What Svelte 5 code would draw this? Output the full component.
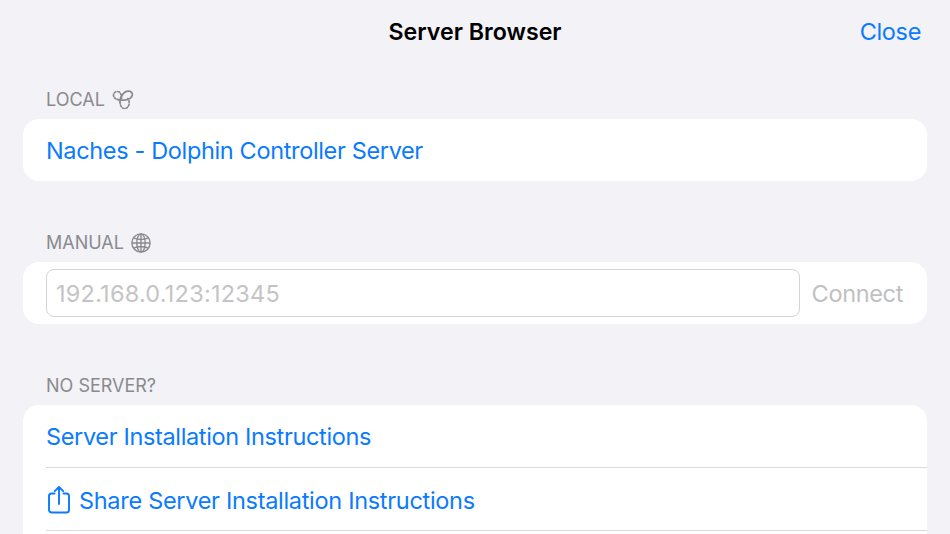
<script>
  const noServerRows = [
    { label: "Server Installation Instructions", share: false },
    { label: "Share Server Installation Instructions", share: true },
    { label: "", share: false },
  ];
</script>

<div class="sheet">
  <header class="nav">
    <h1>Server Browser</h1>
    <button type="button" class="close">Close</button>
  </header>

  <section>
    <h2>
      LOCAL
      <svg class="glyph" width="22" height="20" viewBox="0 0 22 20" fill="none" stroke="#8a8a8e" stroke-width="1.7" stroke-linecap="round">
        <path d="M9.5 8.5C9.5 4 8 1.5 5.5 1.5 3 1.5 1.5 3.3 1.5 5.2c0 2.6 2.4 4.1 5.5 4.6" stroke-dasharray="1.8 1.7" />
        <path d="M7 9.8c3.6.6 8.6.4 11-1.4 2.6-2 3-4.4 1.6-6C18 .7 14 .8 12 2.8 9.6 5.2 8 8.4 8 11.5" />
        <path d="M8 11.5c0 3.6 1.4 7 4.6 7 3 0 4.6-3 4.6-6.2 0-1.4-.6-2.6-1.6-3.6" stroke-dasharray="1.8 1.7" />
      </svg>
    </h2>
    <div class="card">
      <button type="button" class="row">Naches - Dolphin Controller Server</button>
    </div>
  </section>

  <section>
    <h2>
      MANUAL
      <svg class="glyph" width="20" height="20" viewBox="0 0 20 20" fill="none" stroke="#8a8a8e" stroke-width="1.4">
        <circle cx="10" cy="10" r="9.1" />
        <ellipse cx="10" cy="10" rx="4.2" ry="9.1" />
        <path d="M10 .9v18.2M.9 10h18.2M2.6 4.8c4.4 2 10.4 2 14.8 0M2.6 15.2c4.4-2 10.4-2 14.8 0" />
      </svg>
    </h2>
    <div class="card manual">
      <input type="text" placeholder="192.168.0.123:12345" />
      <span class="connect">Connect</span>
    </div>
  </section>

  <section>
    <h2>NO SERVER?</h2>
    <div class="card">
      {#each noServerRows as row}
        <div class="row-wrap">
          <button type="button" class="row" class:with-icon={row.share}>
            {#if row.share}
              <svg class="share" width="24" height="29" viewBox="0 0 24 29" fill="none" stroke="#0a7aff" stroke-width="1.9" stroke-linecap="round" stroke-linejoin="round">
                <path d="M7.5 8.5H4.6A2.6 2.6 0 0 0 2 11.1v13.8a2.6 2.6 0 0 0 2.6 2.6h14.8a2.6 2.6 0 0 0 2.6-2.6V11.1a2.6 2.6 0 0 0-2.6-2.6h-2.9" />
                <path d="M12 19V2M7.8 6.2 12 2l4.2 4.2" />
              </svg>
            {/if}
            {row.label}
          </button>
        </div>
      {/each}
    </div>
  </section>
</div>

<style>
  :global(body) {
    margin: 0;
    background: #f2f2f7;
    overflow: hidden;
  }

  .sheet {
    height: 534px;
    overflow: hidden;
    font-family: Inter, "Liberation Sans", sans-serif;
    background: #f2f2f7;
  }

  .nav {
    height: 63px;
    display: grid;
    grid-template-columns: 1fr auto 1fr;
    align-items: center;
    padding: 0 29px;
  }

  h1 {
    grid-column: 2;
    margin: 0;
    font-size: 23.2px;
    font-weight: 600;
    color: #000;
  }

  .close {
    justify-self: end;
    border: 0;
    padding: 0;
    background: none;
    font: inherit;
    font-size: 23.5px;
    letter-spacing: -0.35px;
    color: #0a7aff;
  }

  section {
    padding: 0 23px;
    margin-bottom: 38px;
  }

  h2 {
    height: 56px;
    margin: 0;
    padding: 0 0 7px 23px;
    box-sizing: border-box;
    display: flex;
    align-items: flex-end;
    gap: 7px;
    font-size: 18px;
    line-height: 24px;
    font-weight: 400;
    color: #8a8a8e;
  }

  section + section h2 {
    height: 43px;
  }

  .glyph {
    margin-bottom: 2px;
  }

  .card {
    background: #fff;
    border-radius: 16px;
    overflow: hidden;
  }

  .row-wrap {
    margin-left: 23px;
    border-bottom: 1px solid #d9d9db;
    height: 62px;
  }

  .row {
    height: 62px;
    display: flex;
    align-items: center;
    gap: 8px;
    width: 100%;
    border: 0;
    padding: 1px 0 0;
    background: none;
    font: inherit;
    font-size: 23.5px;
    letter-spacing: -0.35px;
    color: #0a7aff;
    text-align: left;
  }

  .row.with-icon {
    padding-top: 3px;
    letter-spacing: -0.3px;
  }

  .card > .row {
    padding-left: 23px;
  }

  .share {
    margin: -2px 0 0 1px;
  }

  .manual {
    height: 62px;
    display: flex;
    align-items: center;
    padding: 0 24px 0 23px;
    gap: 12px;
  }

  input {
    flex: 1;
    min-width: 0;
    height: 48px;
    box-sizing: border-box;
    border: 1px solid #d4d4d6;
    border-radius: 8px;
    padding: 1px 9px 0;
    background: #fff;
    font: inherit;
    font-size: 23.5px;
    letter-spacing: 0.23px;
    outline: none;
  }

  input::placeholder {
    color: #c4c4c6;
    opacity: 1;
  }

  .connect {
    padding-top: 1px;
    font-size: 23.5px;
    letter-spacing: -0.35px;
    color: #c0c0c2;
  }
</style>
